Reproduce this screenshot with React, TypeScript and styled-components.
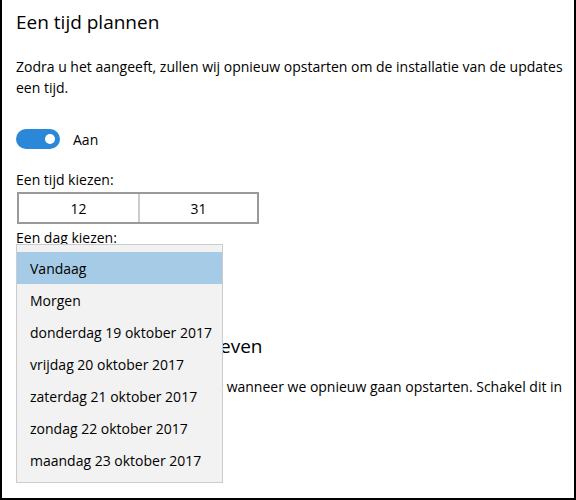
import React from 'react';
import styled, { createGlobalStyle } from 'styled-components';

const GlobalStyle = createGlobalStyle`
  html, body {
    margin: 0;
    padding: 0;
    background: #ffffff;
  }
  * {
    box-sizing: border-box;
  }
`;

const Frame = styled.div`
  width: 576px;
  height: 500px;
  border-left: 2px solid #000;
  border-right: 2px solid #000;
  border-bottom: 2px solid #000;
  background: #fff;
  padding: 8px 0 0 14px;
  position: relative;
  overflow: hidden;
  font-family: "Open Sans", "Noto Sans", sans-serif;
  color: #000;
`;

const Heading = styled.h2<{ $top?: number }>`
  margin: ${p => p.$top ?? 0}px 0 0 0;
  font-size: 19px;
  line-height: 28px;
  font-weight: 400;
  white-space: nowrap;
`;

const Text = styled.p<{ $top: number }>`
  margin: ${p => p.$top}px 0 0 0;
  font-size: 14px;
  line-height: 21px;
  white-space: nowrap;
`;

const ToggleRow = styled.div`
  display: flex;
  align-items: center;
  gap: 13px;
  margin-top: 31px;
  height: 20px;
  font-size: 14px;
`;

const Switch = styled.div<{ $on: boolean }>`
  width: 44px;
  height: 20px;
  border-radius: 10px;
  background: ${p => (p.$on ? '#2b88d8' : '#fff')};
  display: flex;
  align-items: center;
  justify-content: ${p => (p.$on ? 'flex-end' : 'flex-start')};
  padding: 0 5px;

  &::after {
    content: '';
    width: 10px;
    height: 10px;
    border-radius: 50%;
    background: #fff;
  }
`;

const Label = styled.div<{ $top: number }>`
  margin-top: ${p => p.$top}px;
  font-size: 14px;
  line-height: 20px;
`;

const TimePicker = styled.div`
  display: grid;
  grid-template-columns: 1fr 1fr;
  width: 242px;
  height: 32px;
  margin: 2px 0 0 1px;
  border: 2px solid #999;
`;

const TimeCell = styled.div`
  display: flex;
  align-items: center;
  justify-content: center;
  font-size: 14px;
  & + & {
    border-left: 2px solid #ccc;
  }
`;

const Menu = styled.ul`
  position: absolute;
  left: 14px;
  top: 244px;
  width: 207px;
  margin: 0;
  padding: 7px 0 6px 0;
  list-style: none;
  background: #f2f2f2;
  border: 1px solid #ccc;
`;

const MenuItem = styled.li<{ $selected?: boolean }>`
  height: 32px;
  display: flex;
  align-items: center;
  padding-left: 13px;
  font-size: 14px;
  white-space: nowrap;
  background: ${p => (p.$selected ? '#a6cbe6' : 'transparent')};
`;

const days = [
  'Vandaag',
  'Morgen',
  'donderdag 19 oktober 2017',
  'vrijdag 20 oktober 2017',
  'zaterdag 21 oktober 2017',
  'zondag 22 oktober 2017',
  'maandag 23 oktober 2017',
];

const App: React.FC = () => {
  return (
    <>
      <GlobalStyle />
      <Frame>
        <Heading>Een tijd plannen</Heading>
        <Text $top={20}>
          Zodra u het aangeeft, zullen wij opnieuw opstarten om de installatie van de updates
          <br />
          een tijd.
        </Text>
        <ToggleRow>
          <Switch $on />
          <span>Aan</span>
        </ToggleRow>
        <Label $top={21}>Een tijd kiezen:</Label>
        <TimePicker>
          <TimeCell>12</TimeCell>
          <TimeCell>31</TimeCell>
        </TimePicker>
        <Label $top={4}>Een dag kiezen:</Label>
        <Heading $top={84}>Meer meldingen weergeven</Heading>
        <Text $top={16}>
          We geven een herinnering weer wanneer we opnieuw gaan opstarten. Schakel dit in
          <br />
          als u meer meldingen wilt zien.
        </Text>
        <Menu>
          {days.map((d, i) => (
            <MenuItem key={d} $selected={i === 0}>
              {d}
            </MenuItem>
          ))}
        </Menu>
      </Frame>
    </>
  );
};

export default App;
